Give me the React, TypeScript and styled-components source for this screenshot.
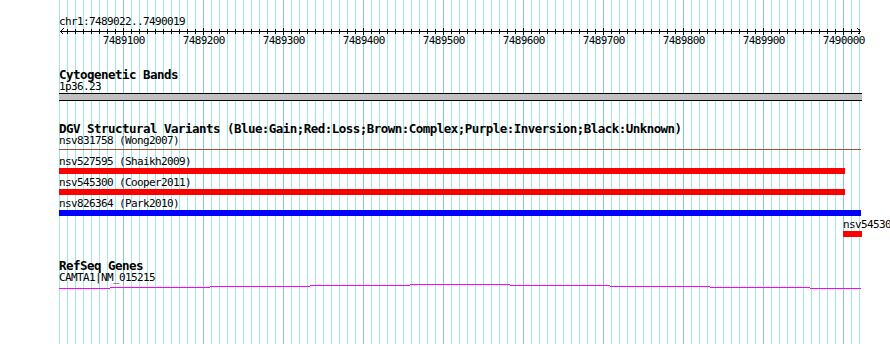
import styled, { createGlobalStyle } from 'styled-components';

const GlobalStyle = createGlobalStyle`
  html, body {
    margin: 0;
    padding: 0;
    background: #ffffff;
  }
`;

const SCALE_WIDTH = 803;
const PANEL_HEIGHT = 344;

const Panel = styled.div`
  position: relative;
  width: 890px;
  height: ${PANEL_HEIGHT}px;
  overflow: hidden;
  padding-left: 59px;
  box-sizing: border-box;
  background: #ffffff;
  font-family: "DejaVu Sans Mono", "Liberation Mono", monospace;
  color: #000000;
`;

const Canvas = styled.div`
  position: relative;
  z-index: 0;
  width: ${SCALE_WIDTH}px;
  height: ${PANEL_HEIGHT}px;
  padding-top: 15px;
  box-sizing: border-box;
  display: flex;
  flex-direction: column;
`;

// grid sits under the tracks
const GridLayer = styled.svg`
  position: absolute;
  top: 0;
  left: 0;
  z-index: -1;
  display: block;
`;

const SmallLabel = styled.div<{ $lh?: number }>`
  font-size: 11px;
  letter-spacing: -0.62px;
  line-height: ${p => p.$lh ?? 13}px;
  height: ${p => p.$lh ?? 13}px;
  white-space: nowrap;
`;

const Track = styled.section<{ $gap: number }>`
  display: flex;
  flex-direction: column;
  margin-top: ${p => p.$gap}px;
`;

const TrackTitle = styled.div`
  font-weight: bold;
  font-size: 12.5px;
  letter-spacing: -0.53px;
  line-height: 12px;
  height: 12px;
  white-space: nowrap;
`;

const BandBox = styled.div`
  margin-top: 1px;
  height: 8px;
  box-sizing: border-box;
  border-top: 1px solid #000;
  border-bottom: 1px solid #000;
  background: #c0c0c0;
`;

const FeatureRow = styled.div<{ $start: number }>`
  display: flex;
  flex-direction: column;
  height: 21px;
  padding-left: ${p => p.$start}px;
  box-sizing: border-box;
`;

const RowLabel = styled.div`
  font-size: 11px;
  letter-spacing: -0.62px;
  line-height: 12px;
  height: 12px;
  white-space: nowrap;
`;

const BarSlot = styled.div`
  height: 6px;
  display: flex;
  flex-direction: column;
`;

const kindColors: Record<string, string> = {
  gain: '#0000ff',
  loss: '#ff0000',
  complex: '#a0522d',
  inversion: '#800080',
  unknown: '#000000',
};

const Bar = styled.div<{ $kind: string; $width: number }>`
  width: ${p => p.$width}px;
  background: ${p => kindColors[p.$kind]};
  height: ${p => (p.$kind === 'complex' ? '1px' : '6px')};
  margin-top: ${p => (p.$kind === 'complex' ? '2px' : '0')};
`;

const Drawing = styled.svg`
  display: block;
  overflow: visible;
`;

const variants = [
  { label: 'nsv831758 (Wong2007)', kind: 'complex', start: 0, width: 802 },
  { label: 'nsv527595 (Shaikh2009)', kind: 'loss', start: 0, width: 786 },
  { label: 'nsv545300 (Cooper2011)', kind: 'loss', start: 0, width: 786 },
  { label: 'nsv826364 (Park2010)', kind: 'gain', start: 0, width: 802 },
  { label: 'nsv54530', kind: 'loss', start: 784, width: 19 },
];

function Grid() {
  const lines = [];
  for (let k = 0; k <= 100; k++) {
    const x = k * 8 + 0.5;
    const major = k % 10 === 8;
    lines.push(
      <line key={k} x1={x} x2={x} y1={0} y2={PANEL_HEIGHT}
        stroke={major ? '#7fc6f2' : '#9ee8e8'} />
    );
  }
  return (
    <GridLayer width={SCALE_WIDTH} height={PANEL_HEIGHT} shapeRendering="crispEdges">
      {lines}
    </GridLayer>
  );
}

function Ruler() {
  const ticks = [];
  for (let k = 1; k <= 100; k++) {
    const x = k * 8 + 0.5;
    const major = k % 10 === 8;
    ticks.push(
      <line key={k} x1={x} x2={x} y1={major ? 0 : 1} y2={major ? 7 : 6} stroke="#000" />
    );
  }
  const labels = [];
  for (let j = 0; j < 10; j++) {
    labels.push(
      <text key={j} x={64.8 + j * 80} y={16} textAnchor="middle"
        fontFamily='"DejaVu Sans Mono", monospace' fontSize={11}
        letterSpacing={-0.62} fill="#000">
        {7489100 + j * 100}
      </text>
    );
  }
  return (
    <Drawing width={SCALE_WIDTH} height={18} shapeRendering="crispEdges">
      <line x1={1} x2={802} y1={3.5} y2={3.5} stroke="#000" />
      <polyline points="4.5,0.5 1.5,3.5 4.5,6.5" fill="none" stroke="#000" />
      <polyline points="798.5,0.5 801.5,3.5 798.5,6.5" fill="none" stroke="#000" />
      {ticks}
      {labels}
    </Drawing>
  );
}

const exons = [
  [0, 51, 5], [51, 151, 4], [151, 251, 3], [251, 351, 2], [351, 451, 1],
  [451, 551, 2], [551, 651, 3], [651, 751, 4], [751, 802, 5],
];

function GeneModel() {
  return (
    <Drawing width={SCALE_WIDTH} height={8} shapeRendering="crispEdges">
      {exons.map(([a, b, y]) => (
        <line key={a} x1={a} x2={b} y1={y + 0.5} y2={y + 0.5} stroke="#ff00ff" />
      ))}
    </Drawing>
  );
}

export default function App() {
  return (
    <>
      <GlobalStyle />
      <Panel>
        <Canvas>
          <Grid />
          <SmallLabel>chr1:7489022..7490019</SmallLabel>
          <Ruler />

          <Track $gap={23}>
            <TrackTitle>Cytogenetic Bands</TrackTitle>
            <SmallLabel $lh={11}>1p36.23</SmallLabel>
            <BandBox />
          </Track>

          <Track $gap={22}>
            <TrackTitle>DGV Structural Variants (Blue:Gain;Red:Loss;Brown:Complex;Purple:Inversion;Black:Unknown)</TrackTitle>
            {variants.map(v => (
              <FeatureRow key={v.label} $start={v.start}>
                <RowLabel>{v.label}</RowLabel>
                <BarSlot>
                  <Bar $kind={v.kind} $width={v.width} />
                </BarSlot>
              </FeatureRow>
            ))}
          </Track>

          <Track $gap={20}>
            <TrackTitle>RefSeq Genes</TrackTitle>
            <SmallLabel $lh={11}>CAMTA1|NM_015215</SmallLabel>
            <GeneModel />
          </Track>
        </Canvas>
      </Panel>
    </>
  );
}
